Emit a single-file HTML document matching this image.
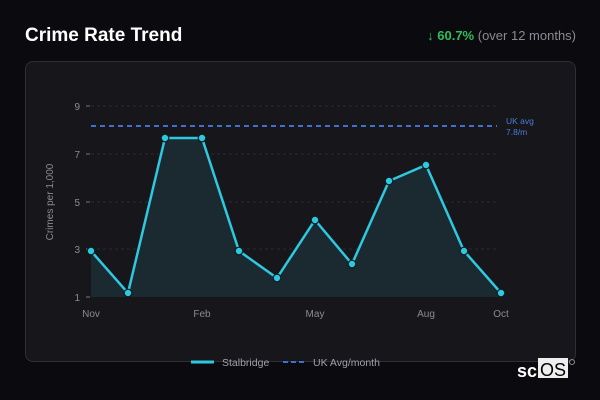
<!DOCTYPE html>
<html><head><meta charset="utf-8"><style>
html,body{margin:0;padding:0;background:#0b0a0f;width:600px;height:400px;overflow:hidden;font-family:"Liberation Sans",sans-serif}
.t{position:absolute;left:25px;top:25px;color:#fff;font-weight:bold;font-size:19px}
.r{position:absolute;right:24px;top:28px;font-size:13px;color:#8a8a90}
.r b{color:#2fbf5a}
.card{position:absolute;left:25px;top:61px;width:549px;height:299px;border:1px solid #2e2e34;border-radius:8px;background:#17171b}
</style></head><body>
<div class="t">Crime Rate Trend</div>
<div class="r"><b>↓ 60.7%</b> (over 12 months)</div>
<div class="card"></div>
<svg width="600" height="400" style="position:absolute;left:0;top:0" font-family="Liberation Sans, sans-serif">
<g stroke="#2a2a30" stroke-dasharray="3 3" stroke-width="1">
<line x1="91" y1="106" x2="497" y2="106"/><line x1="91" y1="154" x2="497" y2="154"/><line x1="91" y1="202" x2="497" y2="202"/><line x1="91" y1="249" x2="497" y2="249"/>
</g>
<g stroke="#777" stroke-width="1"><line x1="86" y1="106" x2="90" y2="106"/><line x1="86" y1="154" x2="90" y2="154"/><line x1="86" y1="202" x2="90" y2="202"/><line x1="86" y1="249" x2="90" y2="249"/><line x1="86" y1="297" x2="90" y2="297"/></g>
<g fill="#8a8a90" font-size="10" text-anchor="end"><text x="80" y="110">9</text><text x="80" y="158">7</text><text x="80" y="206">5</text><text x="80" y="253">3</text><text x="80" y="301">1</text></g>
<text transform="translate(53,202) rotate(-90)" fill="#8a8a90" font-size="10" text-anchor="middle">Crimes per 1,000</text>
<g fill="#8a8a90" font-size="10" text-anchor="middle"><text x="91" y="317">Nov</text><text x="202" y="317">Feb</text><text x="315" y="317">May</text><text x="426" y="317">Aug</text><text x="501" y="317">Oct</text></g>
<polygon fill="#1a2a30" points="91,251 128,293 165,138 202,138 239,251 277,278 315,220 352,264 389,181 426,165 464,251 501,293 501,297 91,297"/>
<line x1="91" y1="126" x2="497" y2="126" stroke="#3f6fd0" stroke-width="2" stroke-dasharray="5 4"/>
<text x="506" y="124" fill="#4a7ad8" font-size="8.5">UK avg</text><text x="506" y="135" fill="#4a7ad8" font-size="8.5">7.8/m</text>
<polyline fill="none" stroke="#2ec8e0" stroke-width="2.5" stroke-linejoin="round" points="91,251 128,293 165,138 202,138 239,251 277,278 315,220 352,264 389,181 426,165 464,251 501,293"/>
<g fill="#2ec8e0" stroke="#0e1a1e" stroke-width="1.2">
<circle cx="91" cy="251" r="3.8"/><circle cx="128" cy="293" r="3.8"/><circle cx="165" cy="138" r="3.8"/><circle cx="202" cy="138" r="3.8"/><circle cx="239" cy="251" r="3.8"/><circle cx="277" cy="278" r="3.8"/><circle cx="315" cy="220" r="3.8"/><circle cx="352" cy="264" r="3.8"/><circle cx="389" cy="181" r="3.8"/><circle cx="426" cy="165" r="3.8"/><circle cx="464" cy="251" r="3.8"/><circle cx="501" cy="293" r="3.8"/>
</g>
<line x1="191" y1="362" x2="214" y2="362" stroke="#2ec8e0" stroke-width="3"/>
<text x="222" y="366" fill="#a0a0a8" font-size="10.5">Stalbridge</text>
<line x1="283" y1="362" x2="306" y2="362" stroke="#3f6fd0" stroke-width="2" stroke-dasharray="5 3"/>
<text x="313" y="366" fill="#a0a0a8" font-size="10.5">UK Avg/month</text>
<text x="517" y="377" fill="#fff" font-size="18" font-weight="bold">sc</text>
<rect x="538" y="358" width="30" height="20" fill="#eee"/>
<text x="553" y="376" fill="#000" font-size="18" text-anchor="middle">OS</text>
<circle cx="572" cy="362" r="2.5" fill="none" stroke="#aaa" stroke-width="0.8"/>
</svg>
</body></html>
